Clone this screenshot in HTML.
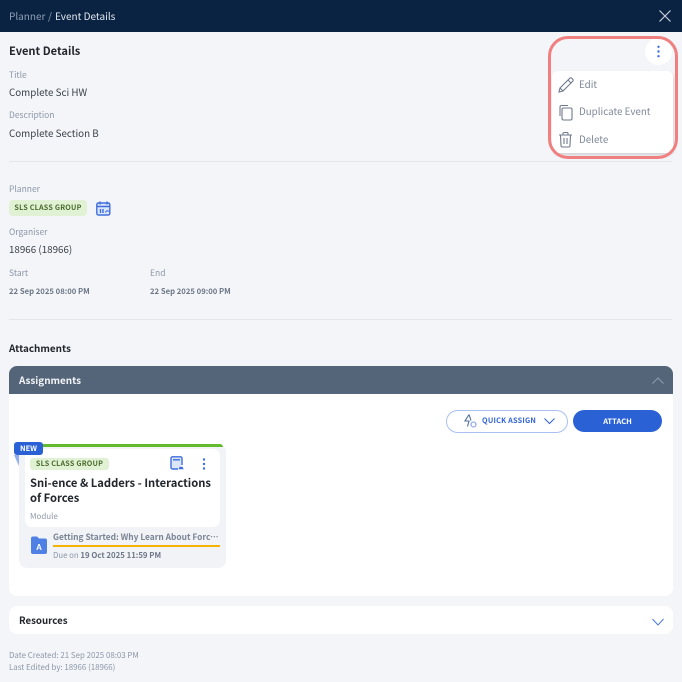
<!DOCTYPE html>
<html><head><meta charset="utf-8"><style>
html,body{margin:0;padding:0}
body{width:682px;height:682px;position:relative;overflow:hidden;background:#f3f5f9;font-family:"Noto Sans CJK JP","Liberation Sans",sans-serif;color:#3a3f47}
.a{position:absolute;white-space:nowrap;line-height:1}
svg{position:absolute;overflow:visible}
.lab{font-size:8.5px;color:#8d97a8}
.val{font-size:9.8px;color:#3c4149}
.dt{font-size:7.7px;font-weight:bold;color:#6d7686}
.tag{position:absolute;white-space:nowrap;background:#e0f1d4;color:#4a6a2c;font-size:7.2px;font-weight:bold;border-radius:4px;text-align:center;letter-spacing:.2px}
.hr{position:absolute;height:1px;background:#e3e6eb}
.mi{font-size:9.8px;color:#7e8899}
</style></head><body>
<div class="a" style="left:0;top:0;width:682px;height:32px;background:#0a2342"></div>
<div class="a" style="left:9px;top:10.5px;font-size:10px;color:#8fa0b4">Planner</div>
<div class="a" style="left:48px;top:10.5px;font-size:10px;color:#8fa0b4">/</div>
<div class="a" style="left:55px;top:10.5px;font-size:10px;color:#e4e9f0">Event Details</div>
<svg style="left:659px;top:10px" width="12" height="12" fill="none" stroke="#c5d0dc" stroke-width="1.2"><path d="M.5.5l11 11M11.500.5l-11 11"/></svg>

<div class="a" style="left:9px;top:45.7px;font-size:11.1px;font-weight:bold;color:#22262c">Event Details</div>
<div class="a lab" style="left:9px;top:70.5px">Title</div>
<div class="a val" style="left:9px;top:87.6px">Complete Sci HW</div>
<div class="a lab" style="left:9px;top:110.5px">Description</div>
<div class="a val" style="left:9px;top:128.6px">Complete Section B</div>
<div class="hr" style="left:9px;top:161px;width:663px"></div>

<div class="a lab" style="left:9px;top:184.5px">Planner</div>
<div class="tag" style="left:9px;top:200px;width:78px;height:16px;line-height:16px">SLS CLASS GROUP</div>
<svg style="left:96px;top:201px" width="15" height="15" fill="none" stroke="#3f6fdc" stroke-width="1.4"><rect x=".8" y="2" width="13" height="12" rx="1.500" fill="#dbe6fa"/><path d="M.8 5.500h13M4 .5v3M11 .5v3M4.500 8v4M7 8v4"/><path d="M9.500 11.500a2 2 0 0 1 3.500-1" stroke-width="1.1"/></svg>
<div class="a lab" style="left:9px;top:227.5px">Organiser</div>
<div class="a val" style="left:9px;top:244.6px">18966 (18966)</div>
<div class="a lab" style="left:9px;top:268.5px">Start</div>
<div class="a lab" style="left:150px;top:268.5px">End</div>
<div class="a dt" style="left:9px;top:288.4px">22 Sep 2025 08:00 PM</div>
<div class="a dt" style="left:150px;top:288.4px">22 Sep 2025 09:00 PM</div>
<div class="hr" style="left:9px;top:319px;width:663px"></div>

<div class="a" style="left:9px;top:344.3px;font-size:9.9px;font-weight:bold;color:#22262c">Attachments</div>

<div class="a" style="left:9px;top:366px;width:664px;height:230px;background:#fff;border-radius:8px;overflow:hidden">
  <div style="height:28px;background:#556579"></div>
</div>
<div class="a" style="left:19px;top:375.5px;font-size:9.9px;font-weight:bold;color:#f2f4f7">Assignments</div>
<svg style="left:652px;top:377px" width="12" height="7" fill="none" stroke="#8f9cae" stroke-width="1"><path d="M.5 6.500L6 1l5.500 5.500"/></svg>

<div class="a" style="left:446px;top:410px;width:120px;height:21px;border:1px solid #a9c1f2;border-radius:12px;background:#fff"></div>
<svg style="left:464px;top:414px" width="13" height="15" fill="none" stroke="#4f6f9e" stroke-width="1.1"><path d="M5 .5L1 7h4L3.500 12.500M5 .5l2 6"/><circle cx="9.500" cy="10.500" r="2.500" stroke="#7c9ee8"/></svg>
<div class="a" style="left:482px;top:418px;font-size:7.3px;font-weight:bold;color:#2f62d4;letter-spacing:.2px">QUICK ASSIGN</div>
<svg style="left:544px;top:418px" width="11" height="7" fill="none" stroke="#2f62d4" stroke-width="1"><path d="M.5.500L5.500 5.500 10.500.500"/></svg>
<div class="a" style="left:573px;top:410px;width:89px;height:22px;background:#2a62d6;border-radius:11px;color:#fff;font-size:7.5px;font-weight:bold;text-align:center;line-height:23px">ATTACH</div>

<!-- card -->
<div class="a" style="left:19px;top:444px;width:207px;height:124px;background:#f1f3f7;border-radius:8px"></div>
<div class="a" style="left:30px;top:444px;width:193px;height:3px;background:#62bb2e;border-radius:2px 6px 0 0"></div>
<div class="a" style="left:25px;top:449px;width:195px;height:78px;background:#fff;border-radius:7px"></div>
<svg style="left:14px;top:455px" width="6" height="12"><path d="M0 0h5v11z" fill="#8fb0ee"/></svg>
<div class="a" style="left:14px;top:442px;width:29px;height:13px;background:#2a62d6;border-radius:3px;color:#fff;font-size:7.5px;font-weight:bold;text-align:center;line-height:14px">NEW</div>
<div class="tag" style="left:30px;top:458px;width:79px;height:12px;line-height:12px;border-radius:3px">SLS CLASS GROUP</div>
<svg style="left:170px;top:456px" width="14" height="15" fill="none" stroke="#3f6fdc" stroke-width="1.4"><path d="M8 13H2.500A1.500 1.500 0 0 1 1 11.500V2.300A1.500 1.500 0 0 1 2.500.8h8A1.500 1.500 0 0 1 12 2.300V9" fill="#dbe6fa"/><path d="M3 3.800h7"/><path d="M8.500 13.300h5.200l-1.200-2.600h-2.800z" fill="#3f6fdc" stroke="none"/></svg>
<svg style="left:202px;top:458px" width="4" height="12" fill="#3f6fdc"><circle cx="2" cy="1.500" r="1.200"/><circle cx="2" cy="6" r="1.200"/><circle cx="2" cy="10.500" r="1.200"/></svg>
<div class="a" style="left:30px;top:476px;font-size:11.2px;font-weight:bold;color:#22262c;line-height:15px">Sni-ence &amp; Ladders - Interactions<br>of Forces</div>
<div class="a" style="left:30px;top:513px;font-size:8px;color:#8d97a8">Module</div>
<svg style="left:31px;top:536px" width="16" height="19"><path d="M0 2.500a2 2 0 0 1 2-2h4l2 2h6a2 2 0 0 1 2 2V16a2 2 0 0 1-2 2H2a2 2 0 0 1-2-2z" fill="#4f80e4"/><text x="8" y="14" text-anchor="middle" font-size="8" font-weight="bold" fill="#fff" font-family="Liberation Sans">A</text></svg>
<div class="a" style="left:53px;top:533.4px;width:167px;overflow:hidden;text-overflow:ellipsis;font-size:8.4px;font-weight:bold;color:#7b8494">Getting Started: Why Learn About Forces and Motion</div>
<div class="a" style="left:53px;top:545px;width:167px;height:2px;background:#f5b400"></div>
<div class="a" style="left:53px;top:552px;font-size:7.8px;color:#8d97a8">Due on <b style="color:#6d7686">19 Oct 2025 11:59 PM</b></div>

<!-- resources -->
<div class="a" style="left:9px;top:606px;width:664px;height:28px;background:#fff;border-radius:8px"></div>
<div class="a" style="left:19px;top:616px;font-size:9.7px;font-weight:bold;color:#22262c">Resources</div>
<svg style="left:652px;top:618px" width="12" height="8" fill="none" stroke="#4a7ae0" stroke-width="1"><path d="M.5 1L6 7l5.500-6"/></svg>
<div class="a" style="left:9px;top:652.3px;font-size:7.9px;color:#8d97a8">Date Created: 21 Sep 2025 08:03 PM</div>
<div class="a" style="left:9px;top:664.3px;font-size:7.9px;color:#8d97a8">Last Edited by: 18966 (18966)</div>

<!-- menu -->
<div class="a" style="left:645px;top:38px;width:27px;height:27px;background:#fff;border-radius:50%"></div>
<svg style="left:656px;top:45px" width="5" height="13" fill="#3f6fdc"><circle cx="2.500" cy="1.800" r="1.200"/><circle cx="2.500" cy="6.500" r="1.200"/><circle cx="2.500" cy="11.200" r="1.200"/></svg>
<div class="a" style="left:552px;top:71px;width:121px;height:82px;background:#fff;border-radius:6px;box-shadow:1px 2px 3px rgba(0,0,0,.15)"></div>
<svg style="left:558px;top:77px" width="16" height="16" fill="none" stroke="#6e7a8c" stroke-width="1.1"><path d="M1 15l1-4L11.500 1.500a1.500 1.500 0 0 1 2.500 0l.5.500a1.500 1.500 0 0 1 0 2.500L5 14z"/><path d="M10 3l3 3M2 11l3 3"/></svg>
<div class="a mi" style="left:579px;top:79.6px">Edit</div>
<svg style="left:559px;top:105px" width="14" height="15" fill="none" stroke="#6e7a8c" stroke-width="1.1"><rect x="3" y="3" width="10" height="12" rx="1.500"/><path d="M1 11V2a1.500 1.500 0 0 1 1.500-1.500H9"/></svg>
<div class="a mi" style="left:579px;top:106.6px">Duplicate Event</div>
<svg style="left:559px;top:132px" width="13" height="15" fill="none" stroke="#6e7a8c" stroke-width="1.1"><path d="M0 3h13M4 3V1.500A1 1 0 0 1 5 .5h3a1 1 0 0 1 1 1V3M1.500 3l.5 10.500A1.500 1.500 0 0 0 3.500 15h6a1.500 1.500 0 0 0 1.500-1.500L11.500 3M5 6v6M8 6v6"/></svg>
<div class="a mi" style="left:579px;top:134.6px">Delete</div>
<div class="a" style="left:548px;top:36px;width:124px;height:117px;border:3px solid #f08080;border-radius:20px"></div>
</body></html>
